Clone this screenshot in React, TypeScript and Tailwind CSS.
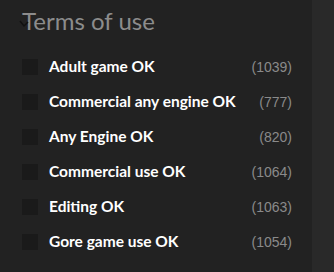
import React from 'react'

const terms = [
  { label: 'Adult game OK', count: 1039 },
  { label: 'Commercial any engine OK', count: 777 },
  { label: 'Any Engine OK', count: 820 },
  { label: 'Commercial use OK', count: 1064 },
  { label: 'Editing OK', count: 1063 },
  { label: 'Gore game use OK', count: 1054 },
]

export default function App() {
  return (
    <div className="flex h-[272px] w-[334px] bg-[#292929]">
      <div className="w-[312px] bg-[#222222] pl-[22px] pr-[20px] pt-[6px]" style={{ fontFamily: 'Lato, sans-serif' }}>
        <div className="relative h-[38px]">
          <svg className="absolute left-[-3px] top-[14px]" width="10" height="8" viewBox="0 0 10 8">
            <path d="M1 1 L5 6 L9 2" stroke="#111" strokeWidth="1.5" fill="none" />
          </svg>
          <h2 className="text-[24px] leading-[30px] text-[#8c8c8c]">Terms of use</h2>
        </div>
        <ul className="mt-[15px] flex flex-col gap-[19px]">
          {terms.map(t => (
            <li key={t.label} className="flex h-[16px] items-center">
              <span className="h-[16px] w-[16px] bg-[#1a1a1a]" />
              <span className="ml-[11px] text-[15.5px] font-bold text-white">{t.label}</span>
              <span className="ml-auto text-[14px] text-[#8a8a8a]" style={{ fontFamily: '"Liberation Sans", Arial, sans-serif' }}>({t.count})</span>
            </li>
          ))}
        </ul>
      </div>
    </div>
  )
}
